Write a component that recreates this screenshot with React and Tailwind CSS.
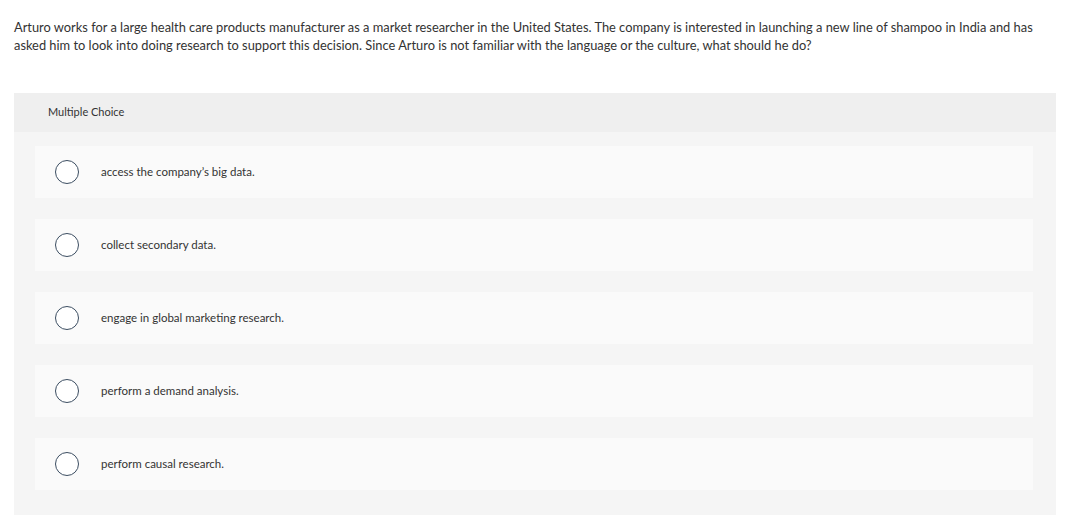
const options = [
  'access the company’s big data.',
  'collect secondary data.',
  'engage in global marketing research.',
  'perform a demand analysis.',
  'perform causal research.',
];

const Radio = () => (
  <span className="block w-[24px] h-[24px] rounded-full border-[1.5px] border-[#3b4d61] bg-white shrink-0" />
);

export default function App() {
  return (
    <div className="w-[1066px] h-[523px] bg-white text-[#333] font-['Lato','Liberation_Sans',sans-serif] overflow-hidden">
      <div className="pt-[18px] pl-[14px] pr-[10px] text-[12.85px] leading-[18px]">
        <p className="whitespace-nowrap">
          Arturo works for a large health care products manufacturer as a market researcher in the United States. The company is interested in launching a new line of shampoo in India and has
          <br />
          asked him to look into doing research to support this decision. Since Arturo is not familiar with the language or the culture, what should he do?
        </p>
      </div>

      <div className="mt-[39px] ml-[14px] w-[1042px] h-[422px] bg-[#f5f5f5]">
        <div className="h-[39px] bg-[#efefef] flex items-center pl-[34px] text-[11px]">
          Multiple Choice
        </div>
        <div className="pt-[14px] pl-[21px] pr-[23px] flex flex-col gap-[21px]">
          {options.map((opt, idx) => (
            <label
              key={idx}
              className="h-[52px] bg-[#fafafa] flex items-center pl-[20px] cursor-pointer"
            >
              <Radio />
              <span className="ml-[22px] text-[11.5px]">{opt}</span>
            </label>
          ))}
        </div>
      </div>
    </div>
  );
}
